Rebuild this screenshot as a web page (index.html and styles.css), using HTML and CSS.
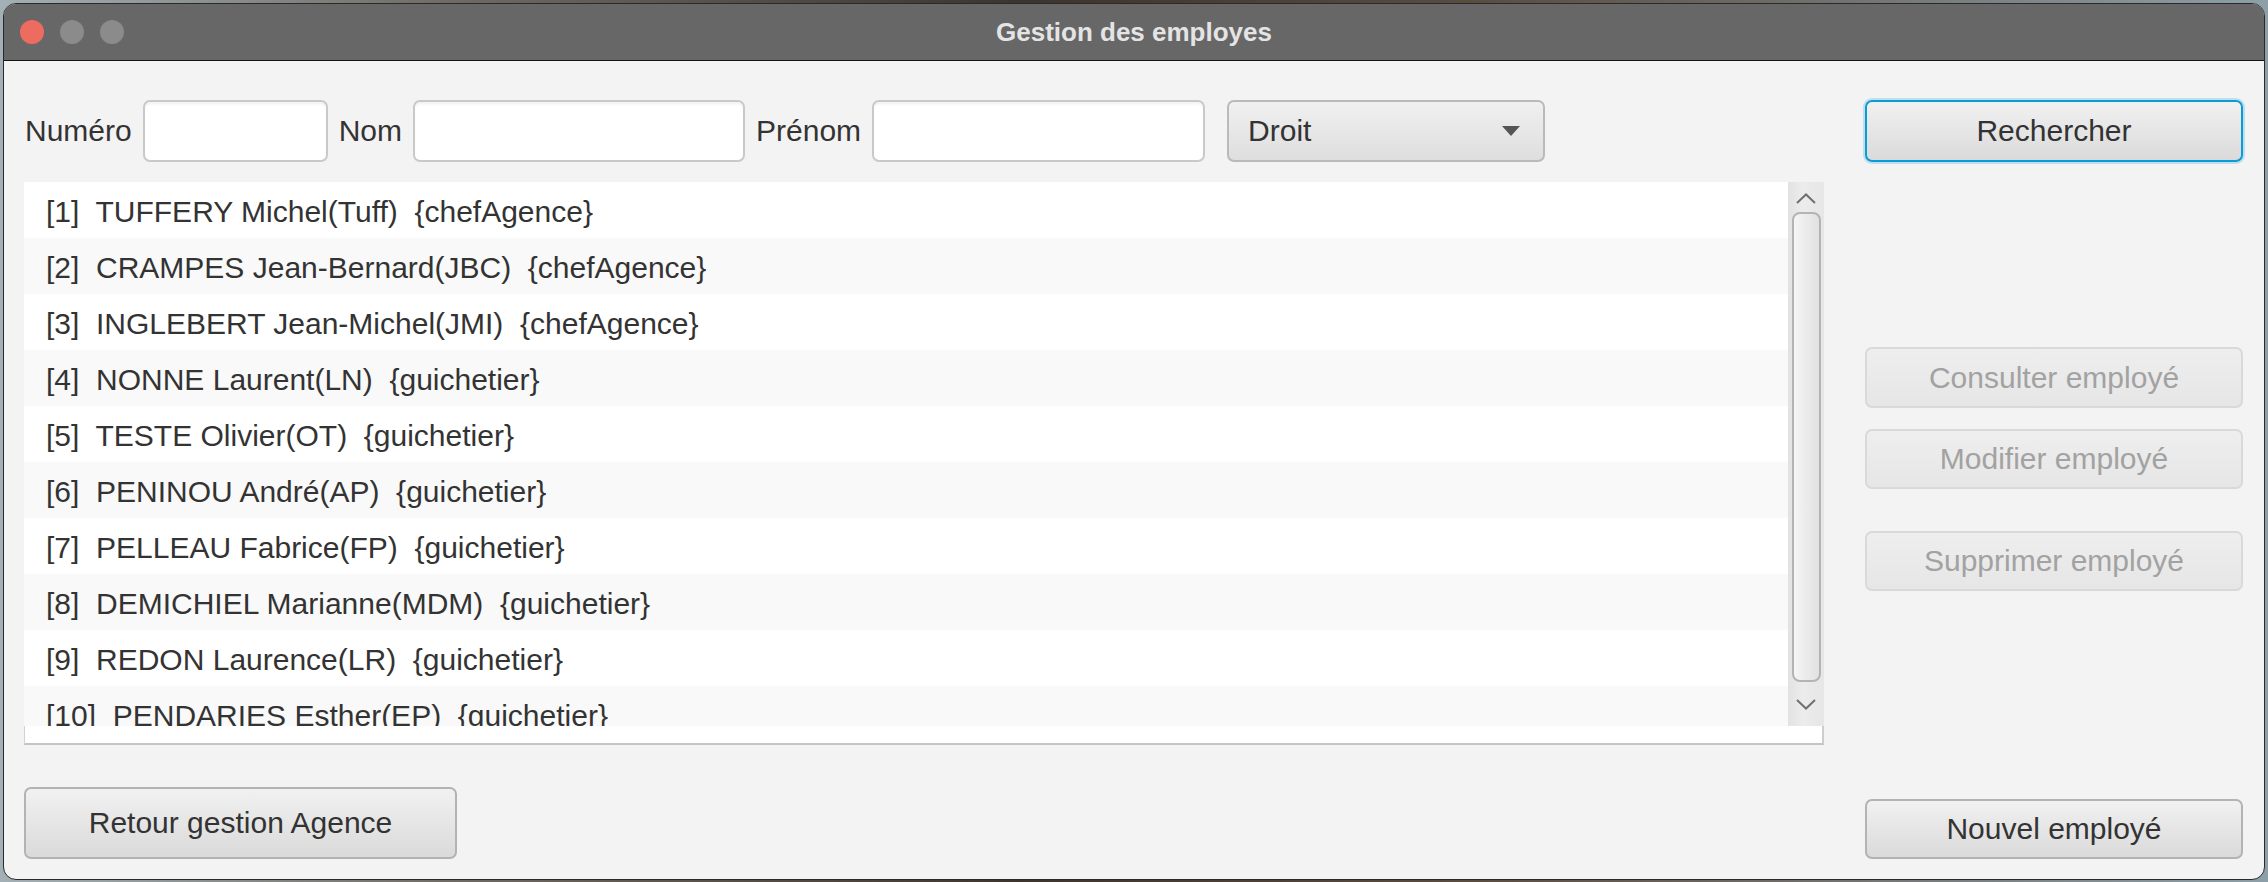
FILE: index.html
```html
<!DOCTYPE html>
<html lang="fr">
<head>
<meta charset="utf-8">
<title>Gestion des employes</title>
<link rel="stylesheet" href="styles.css">
</head>
<body>
<div class="window">
  <div class="titlebar">
    <div class="lights">
      <span class="light red"></span>
      <span class="light grey"></span>
      <span class="light grey"></span>
    </div>
    <div class="title">Gestion des employes</div>
  </div>
  <div class="content">
    <div class="left">
      <div class="filters">
        <label class="lbl">Numéro</label>
        <div class="field f-num"></div>
        <label class="lbl">Nom</label>
        <div class="field f-nom"></div>
        <label class="lbl">Prénom</label>
        <div class="field f-prenom"></div>
        <div class="combo">
          <span>Droit</span>
          <svg class="tri" width="18" height="10" viewBox="0 0 18 10"><polygon points="0,0 18,0 9,10" fill="#555"/></svg>
        </div>
      </div>
      <div class="list">
        <div class="list-body">
          <div class="cells">
            <div class="row">[1]  TUFFERY Michel(Tuff)  {chefAgence}</div>
            <div class="row alt">[2]  CRAMPES Jean-Bernard(JBC)  {chefAgence}</div>
            <div class="row">[3]  INGLEBERT Jean-Michel(JMI)  {chefAgence}</div>
            <div class="row alt">[4]  NONNE Laurent(LN)  {guichetier}</div>
            <div class="row">[5]  TESTE Olivier(OT)  {guichetier}</div>
            <div class="row alt">[6]  PENINOU André(AP)  {guichetier}</div>
            <div class="row">[7]  PELLEAU Fabrice(FP)  {guichetier}</div>
            <div class="row alt">[8]  DEMICHIEL Marianne(MDM)  {guichetier}</div>
            <div class="row">[9]  REDON Laurence(LR)  {guichetier}</div>
            <div class="row alt">[10]  PENDARIES Esther(EP)  {guichetier}</div>
          </div>
          <div class="scrollbar">
            <div class="sb-btn sb-up">
              <svg width="20" height="11" viewBox="0 0 20 11"><polyline points="1,10 10,1.5 19,10" fill="none" stroke="#707070" stroke-width="2"/></svg>
            </div>
            <div class="thumb"></div>
            <div class="sb-btn sb-down">
              <svg width="20" height="11" viewBox="0 0 20 11"><polyline points="1,1 10,9.5 19,1" fill="none" stroke="#707070" stroke-width="2"/></svg>
            </div>
          </div>
        </div>
        <div class="list-foot"></div>
      </div>
      <button class="btn btn-retour">Retour gestion Agence</button>
    </div>
    <div class="right">
      <button class="btn btn-search">Rechercher</button>
      <button class="btn disabled b-consult">Consulter employé</button>
      <button class="btn disabled b-modif">Modifier employé</button>
      <button class="btn disabled b-suppr">Supprimer employé</button>
      <button class="btn b-new">Nouvel employé</button>
    </div>
  </div>
</div>
</body>
</html>
```
FILE: styles.css
```css
* { box-sizing: border-box; }

html, body {
  margin: 0;
  padding: 0;
}

body {
  width: 2268px;
  height: 882px;
  overflow: hidden;
  background: linear-gradient(to right, #a3b0b5 0%, #6f6a63 20%, #3d342d 45%, #5b4c40 65%, #8d9fa8 100%);
  font-family: "Liberation Sans", Arial, sans-serif;
  color: #333333;
}

.window {
  margin: 3px 3px 2px 3px;
  width: 2262px;
  height: 877px;
  border: 1px solid #2a2a2a;
  border-radius: 13px;
  overflow: hidden;
  display: flex;
  flex-direction: column;
  background: #f3f3f3;
}

.titlebar {
  height: 57px;
  flex: 0 0 57px;
  background: #676767;
  border-bottom: 1px solid #161616;
  display: flex;
  align-items: center;
  justify-content: center;
  position: relative;
}

.lights {
  position: absolute;
  left: 16px;
  top: 16px;
  display: flex;
  gap: 16px;
}

.light {
  width: 24px;
  height: 24px;
  border-radius: 50%;
  display: block;
}
.light.red { background: #ee6b5f; }
.light.grey { background: #8b8b8b; }

.title {
  font-weight: bold;
  font-size: 26px;
  color: #e4e4e4;
  margin-top: 0;
}

.content {
  flex: 1;
  display: grid;
  grid-template-columns: 1800px 378px;
  column-gap: 41px;
  padding: 39px 21px 20px 20px;
}

.left {
  display: flex;
  flex-direction: column;
}

.filters {
  height: 62px;
  display: flex;
  align-items: center;
  gap: 11px;
  padding-left: 1px;
}

.lbl {
  font-size: 30px;
  color: #333;
}

.field {
  height: 62px;
  background: #ffffff;
  border: 2px solid #c9c9c9;
  border-radius: 7px;
  box-shadow: inset 0 3px 3px -1px rgba(0,0,0,0.06);
}
.f-num { width: 185px; }
.f-nom { width: 332px; }
.f-prenom { width: 333px; }

.combo {
  margin-left: 11px;
  width: 318px;
  height: 62px;
  border: 2px solid #bababa;
  border-radius: 7px;
  background: linear-gradient(to bottom, #f0f0f0, #dedede);
  display: flex;
  align-items: center;
  justify-content: space-between;
  padding: 0 23px 0 19px;
  font-size: 30px;
  color: #333;
}

.list {
  margin-top: 20px;
  height: 563px;
  display: flex;
  flex-direction: column;
}

.list-body {
  height: 544px;
  display: flex;
  background: #ffffff;
}

.cells {
  width: 1764px;
  height: 544px;
  overflow: hidden;
}

.row {
  height: 56px;
  display: flex;
  align-items: center;
  padding: 3px 0 0 22px;
  font-size: 30px;
  white-space: pre;
  color: #333;
  background: #ffffff;
}
.row.alt { background: #f9f9f9; }

.scrollbar {
  width: 36px;
  height: 544px;
  background: linear-gradient(to right, #e2e2e2, #ececec 40%, #e6e6e6);
  display: flex;
  flex-direction: column;
  align-items: center;
}

.sb-btn {
  display: flex;
  align-items: center;
  justify-content: center;
  width: 36px;
}
.sb-up { height: 30px; padding-top: 2px; }
.sb-down { flex: 1; padding-top: 0; }

.thumb {
  width: 29px;
  height: 470px;
  border: 2px solid #b4b4b4;
  border-radius: 8px;
  background: linear-gradient(to right, #f5f5f5, #e1e1e1);
}

.list-foot {
  height: 19px;
  background: #ffffff;
  border-left: 1px solid #d2d2d2;
  border-right: 2px solid #cdcdcd;
  border-bottom: 2px solid #c4c4c4;
}

.btn {
  font-family: "Liberation Sans", Arial, sans-serif;
  font-size: 30px;
  color: #333;
  border: 2px solid #b3b3b3;
  border-radius: 7px;
  background: linear-gradient(to bottom, #f1f1f1, #dadada);
  padding: 0;
  display: flex;
  align-items: center;
  justify-content: center;
}

.btn-retour {
  margin-top: auto;
  width: 433px;
  height: 72px;
}

.right {
  display: flex;
  flex-direction: column;
}

.btn-search {
  height: 62px;
  border: 2px solid #0b9bd7;
  box-shadow: 0 0 0 2px rgba(11,155,215,0.22);
}

.btn.disabled {
  color: #a2a2a2;
  border-color: #d9d9d9;
  background: linear-gradient(to bottom, #eeeeee, #e6e6e6);
}

.b-consult { margin-top: 185px; height: 61px; }
.b-modif { margin-top: 21px; height: 60px; }
.b-suppr { margin-top: 42px; height: 60px; }
.b-new { margin-top: auto; height: 60px; }
```
